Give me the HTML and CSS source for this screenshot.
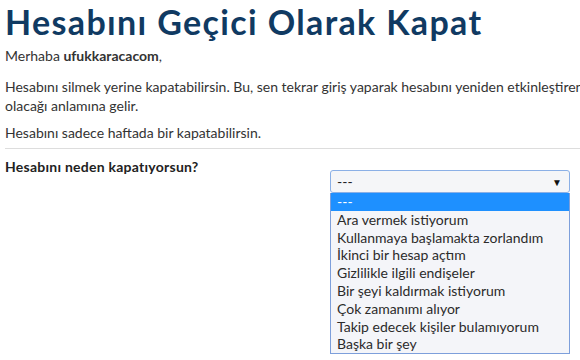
FILE: index.html
```html
<!DOCTYPE html>
<html lang="tr">
<head>
  <meta charset="UTF-8">
  <meta name="viewport" content="width=device-width, initial-scale=1.0">
  <title>Hesabını Geçici Olarak Kapat</title>
  <link rel="stylesheet" href="styles.css">
</head>
<body>
  <div class="page">
    <h1>Hesabını Geçici Olarak Kapat</h1>

    <p class="hello">Merhaba <b>ufukkaracacom</b>,</p>

    <p class="wide">Hesabını silmek yerine kapatabilirsin. Bu, sen tekrar giriş yaparak hesabını yeniden etkinleştirene kadar profilinin gizli<br>olacağı anlamına gelir.</p>

    <p class="note">Hesabını sadece haftada bir kapatabilirsin.</p>

    <hr>

    <div class="field">
      <label>Hesabını neden kapatıyorsun?</label>
      <div class="picker">
        <div class="select">
          <span>---</span>
          <span class="arrow">&#9660;</span>
        </div>
        <ul class="options">
          <li class="active">---</li>
          <li>Ara vermek istiyorum</li>
          <li>Kullanmaya başlamakta zorlandım</li>
          <li>İkinci bir hesap açtım</li>
          <li>Gizlilikle ilgili endişeler</li>
          <li>Bir şeyi kaldırmak istiyorum</li>
          <li>Çok zamanımı alıyor</li>
          <li>Takip edecek kişiler bulamıyorum</li>
          <li>Başka bir şey</li>
        </ul>
      </div>
    </div>
  </div>
</body>
</html>
```

FILE: styles.css
```css
* { box-sizing: border-box; }
html, body { overflow: hidden; }
body {
  margin: 0;
  font-family: Lato, 'Open Sans', sans-serif;
  font-size: 14px;
  color: #333;
  background: #fff;
}
.page {
  width: 620px;
  padding: 0 0 0 5px;
}
h1 {
  margin: 0;
  padding-top: 2px;
  font-size: 34px;
  line-height: 40px;
  letter-spacing: 1.35px;
  font-weight: bold;
  color: #103a62;
}
p {
  margin: 0;
  line-height: 19px;
}
.hello { margin-top: 4px; }
.wide { margin-top: 12px; white-space: nowrap; }
.note { margin-top: 8px; }
hr {
  border: none;
  border-top: 1px solid #ddd;
  margin: 6px 0 9px;
}
.field {
  display: flex;
  justify-content: space-between;
  width: 565px;
}
label {
  font-weight: bold;
  color: #222;
  line-height: 18px;
  letter-spacing: 0.25px;
}
.picker {
  width: 240px;
  margin-top: 12px;
}
.select {
  display: flex;
  justify-content: space-between;
  align-items: center;
  height: 23px;
  padding: 0 7px 0 6px;
  background: #f5f6f8;
  border: 1px solid #8bb0e6;
  border-radius: 3px;
  color: #222;
}
.arrow { font-size: 10px; color: #111; }
.options {
  list-style: none;
  margin: 0;
  padding: 0;
  background: #f4f5f9;
  border: 1px solid #7d9fdb;
  border-top: none;
}
.options li {
  height: 17.8px;
  line-height: 17.8px;
  padding-left: 6px;
  color: #2b2b2b;
}
.options li.active {
  background: #1e90ff;
  color: #fff;
}
```
